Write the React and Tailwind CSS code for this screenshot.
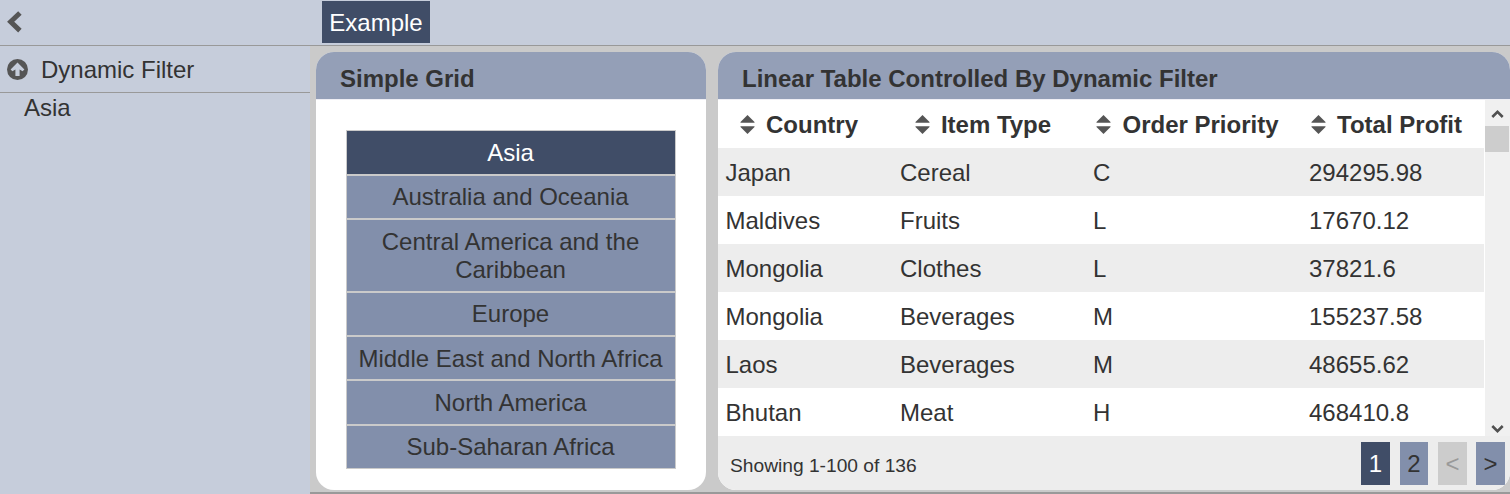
import clsx from "clsx";

const regions = [
  { name: "Asia", height: "h-[45px]", active: true },
  { name: "Australia and Oceania", height: "h-[44px]" },
  { name: "Central America and the Caribbean", height: "h-[73px]" },
  { name: "Europe", height: "h-[44px]" },
  { name: "Middle East and North Africa", height: "h-[44px] pt-0.5" },
  { name: "North America", height: "h-[45px]" },
  { name: "Sub-Saharan Africa", height: "h-[44px]" },
];

const columns = [
  { label: "Country", width: "w-[175px]" },
  { label: "Item Type", width: "w-[193px]" },
  { label: "Order Priority", width: "w-[216px]" },
  { label: "Total Profit", width: "w-[182px]" },
];

const rows = [
  ["Japan", "Cereal", "C", "294295.98"],
  ["Maldives", "Fruits", "L", "17670.12"],
  ["Mongolia", "Clothes", "L", "37821.6"],
  ["Mongolia", "Beverages", "M", "155237.58"],
  ["Laos", "Beverages", "M", "48655.62"],
  ["Bhutan", "Meat", "H", "468410.8"],
];

const SortIcon = () => (
  <svg className="w-[15px] h-[20px] shrink-0" viewBox="0 0 15 20" fill="#555555">
    <path d="M7.5 0 L14.5 7 V7.8 H0.5 V7 Z" />
    <path d="M0.5 11.2 H14.5 V12 L7.5 19 L0.5 12 Z" />
  </svg>
);

const ScrollArrow = ({ down }) => (
  <svg
    className={clsx("w-[13px] h-[10px]", down && "rotate-180")}
    viewBox="0 0 13 10"
    fill="none"
    stroke="#505050"
    strokeWidth="2.6"
  >
    <path d="M1.3 8 L6.5 2.8 L11.7 8" />
  </svg>
);

const Card = ({ title, className, children }) => (
  <section className={clsx("flex flex-col h-[438px] rounded-[18px] overflow-hidden bg-white", className)}>
    <h2 className="h-12 shrink-0 pl-6 pt-[3px] leading-[48px] font-bold bg-[#949fb7] border-b border-[#eeeef4]">
      {title}
    </h2>
    {children}
  </section>
);

const App = () => {
  return (
    <div className="w-[1510px] h-[494px] flex flex-col overflow-hidden bg-[#cacaca] text-[#333333] text-[24px] leading-[28px] font-['Liberation_Sans',Arial,sans-serif]">
      <header className="flex h-[46px] shrink-0 border-b border-[#999999] bg-[#c6cddb]">
        <div className="w-[322px] pl-[7px] pt-[11px]">
          <svg className="w-[15px] h-[22px]" viewBox="0 0 15 22" fill="none" stroke="#555555" strokeWidth="5">
            <path d="M12.9 2 L3.7 10.8 L12.9 19.6" />
          </svg>
        </div>
        <button className="mt-px pt-0.5 w-[108px] h-[42px] bg-[#404d67] text-white">Example</button>
      </header>

      <div className="flex grow">
        <aside className="w-[310px] shrink-0 bg-[#c6cddb]">
          <div className="flex items-center h-[47px] pl-[7px] gap-[13px] border-b border-[#999999]">
            <svg className="w-[21px] h-[21px]" viewBox="0 0 21 21">
              <circle cx="10.5" cy="10.5" r="10.5" fill="#555555" />
              <path
                d="M10.5 3.4 L17.4 10.4 L15.6 12.2 L12.6 10.6 V17 H8.4 V10.6 L5.4 12.2 L3.6 10.4 Z"
                fill="#c6cddb"
              />
            </svg>
            <span className="pt-0.5">Dynamic Filter</span>
          </div>
          <p className="pl-6 pt-px">Asia</p>
        </aside>

        <main className="flex grow gap-3 pl-1.5 pt-1.5 border-b-2 border-[#999999]">
          <Card title="Simple Grid" className="w-[390px]">
            <ul className="mx-[30px] mt-[30px]">
              {regions.map((region) => (
                <li
                  key={region.name}
                  className={clsx(
                    "flex items-center justify-center text-center pl-2 pr-[9px] border border-[#cacaca]",
                    region.height,
                    region.active ? "bg-[#404d67] text-white" : "bg-[#828fab]"
                  )}
                >
                  {region.name}
                </li>
              ))}
            </ul>
          </Card>

          <Card title="Linear Table Controlled By Dynamic Filter" className="w-[792px]">
            <div className="flex h-[336px] shrink-0">
              <table className="w-[766px] h-[336px] table-fixed border-collapse">
                <thead>
                  <tr className="h-12">
                    {columns.map((col) => (
                      <th key={col.label} className={clsx("p-0 pt-0.5 pr-[13px]", col.width)}>
                        <div className="flex items-center justify-center gap-[11px]">
                          <SortIcon />
                          {col.label}
                        </div>
                      </th>
                    ))}
                  </tr>
                </thead>
                <tbody>
                  {rows.map((row, index) => (
                    <tr key={index} className="h-12 odd:bg-[#ededed]">
                      {row.map((cell, i) => (
                        <td key={i} className="p-0 pl-[7px] pt-0.5 first:pl-[7.5px]">{cell}</td>
                      ))}
                    </tr>
                  ))}
                </tbody>
              </table>
              <div className="flex flex-col items-center ml-px w-[25px] h-[336px] shrink-0 bg-[#f0f0f0]">
                <div className="flex items-center h-[26px] pt-0.5"><ScrollArrow /></div>
                <div className="w-6 h-[26px] mr-px bg-[#cdcdcd]" />
                <div className="flex mt-auto mb-0.5"><ScrollArrow down /></div>
              </div>
            </div>
            <footer className="flex grow items-start pt-1.5 pl-3 bg-[#ededed]">
              <span className="mt-2.5 text-[19.2px]">Showing 1-100 of 136</span>
              <div className="flex ml-auto mr-[5px]">
                <button className="w-[29px] h-[43px] mr-[10px] bg-[#404d67] text-white">1</button>
                <button className="w-7 h-[43px] mr-[10px] bg-[#828fab]">2</button>
                <button className="w-[29px] h-[43px] mr-[9px] bg-[#cccccc] text-[#999999]">&lt;</button>
                <button className="w-[29px] h-[43px] bg-[#828fab]">&gt;</button>
              </div>
            </footer>
          </Card>
        </main>
      </div>
    </div>
  );
};

export default App;
